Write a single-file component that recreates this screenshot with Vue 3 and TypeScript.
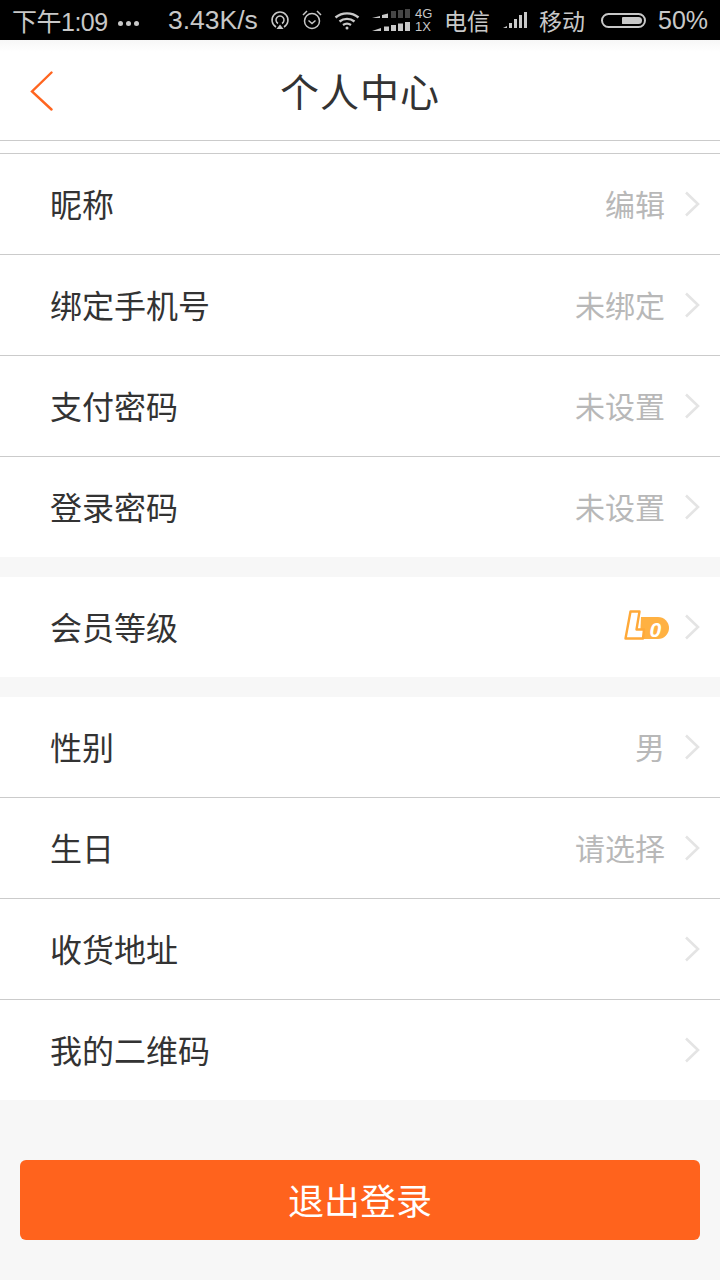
<script setup lang="ts">
interface Row {
  label: string
  value?: string
  level?: boolean
}

const groups: Row[][] = [
  [
    { label: '昵称', value: '编辑' },
    { label: '绑定手机号', value: '未绑定' },
    { label: '支付密码', value: '未设置' },
    { label: '登录密码', value: '未设置' },
  ],
  [{ label: '会员等级', level: true }],
  [
    { label: '性别', value: '男' },
    { label: '生日', value: '请选择' },
    { label: '收货地址' },
    { label: '我的二维码' },
  ],
]
</script>

<template>
  <div class="page">
    <div class="status">
      <span class="time">下午1:09</span>
      <span class="dots"><i /><i /><i /></span>
      <span class="speed">3.43K/s</span>
      <svg class="ic-sync" width="20" height="20" viewBox="0 0 20 20" fill="none" stroke="#c8c8c8" stroke-width="1.5">
        <path d="M6 17A8 8 0 1 1 14 17M8 13.500A4 4 0 1 1 12 13.500" />
        <path d="M6.500 19L10 14.500 13.500 19z" fill="#c8c8c8" stroke="none" />
      </svg>
      <svg class="ic-alarm" width="22" height="22" viewBox="0 0 22 22" fill="none" stroke="#c8c8c8" stroke-width="1.5">
        <circle cx="11" cy="12" r="7.500" />
        <path d="M7.500 11.500l3.500 3 3.500-3M2 6l4-4M20 6l-4-4" />
      </svg>
      <svg class="ic-wifi" width="26" height="20" viewBox="0 0 26 20" fill="none" stroke="#c8c8c8" stroke-width="2.400">
        <path d="M1.500 7.500c6.500-5.500 16.500-5.500 23 0M5.500 11.500c4.500-3.500 10.500-3.500 15 0M9 15c2.500-1.700 5.500-1.700 8 0" />
        <circle cx="13" cy="18" r="1.500" fill="#c8c8c8" stroke="none" />
      </svg>
      <svg class="ic-sig" width="38" height="24" viewBox="0 0 38 24" fill="#c8c8c8">
        <g opacity="0.35">
          <rect x="19" y="3" width="5" height="7" />
          <rect x="26" y="2" width="5" height="8" />
          <rect x="33" y="1" width="5" height="9" />
        </g>
        <path d="M0 10l8-2v2zM10 10V7l6-1.500V10z" />
        <path d="M0 23l9-3v3z" />
        <rect x="12" y="18.500" width="5" height="4.500" />
        <rect x="19" y="17" width="5" height="6" />
        <rect x="26" y="15.500" width="5" height="7.500" />
        <rect x="33" y="14" width="5" height="9" />
      </svg>
      <span class="net"><b>4G</b><b>1X</b></span>
      <span class="carrier first">电信</span>
      <svg class="ic-bars" width="26" height="18" viewBox="0 0 26 18" fill="#c8c8c8">
        <path d="M0 17l4-2v2zM6 17v-5h3v5zM11 17V8h3v9zM16 17V4h3v13zM21 17V1h3v16z" />
      </svg>
      <span class="carrier">移动</span>
      <span class="battery"><i /></span>
      <span class="pct">50%</span>
    </div>

    <header class="nav">
      <svg class="back" width="24" height="40" viewBox="0 0 24 40" fill="none" stroke="#ff6520" stroke-width="2.400" stroke-linecap="round">
        <path d="M21.500 1.500L2 20.500l19.500 18" />
      </svg>
      <h1>个人中心</h1>
    </header>

    <div class="spacer" />

    <section v-for="(group, g) in groups" :key="g" class="group">
      <div v-for="row in group" :key="row.label" class="row">
        <span class="label">{{ row.label }}</span>
        <span v-if="row.value" class="value">{{ row.value }}</span>
        <svg v-if="row.level" class="level" width="48" height="34" viewBox="0 2 48 34">
          <path d="M19 9h17a11 11 0 0 1 0 22H18z" fill="#ffb142" />
          <path d="M8.500 3.500h9L14.500 21.500H22L21 30.500H3.500z" fill="#fff" stroke="#ffa938" stroke-width="2.400" stroke-linejoin="round" />
          <text x="27.500" y="29" class="level-num">0</text>
        </svg>
        <svg class="chev" width="16" height="26" viewBox="0 0 16 26" fill="none" stroke="#e4e4e4" stroke-width="2.600">
          <path d="M2 1.500L14 13 2 24.500" />
        </svg>
      </div>
    </section>

    <div class="footer">
      <button class="logout" type="button">退出登录</button>
    </div>
  </div>
</template>

<style scoped>
.page {
  width: 720px;
  height: 1280px;
  overflow: hidden;
  background: #f7f7f7;
  font-family: "Liberation Sans", "Noto Sans CJK SC", sans-serif;
}

.status {
  height: 40px;
  background: #000;
  color: #c8c8c8;
  display: flex;
  align-items: center;
  font-size: 26px;
  padding-left: 12px;
  white-space: nowrap;
}

.time {
  width: 104px;
  font-size: 25px;
  letter-spacing: -0.5px;
}

.dots {
  display: flex;
  gap: 3px;
  margin: 6px 0 0 2px;
  width: 50px;
}

.dots i {
  width: 5px;
  height: 5px;
  border-radius: 50%;
  background: #c8c8c8;
}

.speed {
  width: 102px;
  font-size: 26.500px;
}

.ic-alarm {
  margin-left: 11px;
}

.ic-wifi {
  margin-left: 11px;
}

.ic-sig {
  margin-left: 12px;
}

.net {
  display: flex;
  flex-direction: column;
  font-size: 13px;
  line-height: 13px;
  margin-left: 5px;
  width: 22px;
}

.net b {
  font-weight: 400;
}

.carrier {
  font-size: 23px;
}

.carrier.first {
  margin-left: 7px;
}

.ic-bars {
  margin: 0 10px 0 13px;
}

.battery {
  width: 45px;
  height: 15px;
  border: 2px solid #c8c8c8;
  border-radius: 9px;
  margin-left: 16px;
  display: flex;
  justify-content: flex-end;
  padding: 2px;
  box-sizing: border-box;
}

.battery i {
  width: 20px;
  background: #c8c8c8;
  border-radius: 1px 4px 4px 1px;
}

.pct {
  margin-left: 12px;
  font-size: 25px;
}

.nav {
  height: 100px;
  background: linear-gradient(#f7f7f7, #fff 12px);
  border-bottom: 1px solid #cbcbcb;
  display: flex;
  align-items: center;
  justify-content: center;
  position: relative;
}

.nav h1 {
  margin: 0;
  font-size: 39px;
  font-weight: 400;
  color: #333;
  letter-spacing: 1px;
}

.back {
  position: absolute;
  left: 30px;
  top: 31px;
}

.spacer {
  height: 12px;
  background: #fff;
  border-bottom: 1px solid #cbcbcb;
}

.group {
  background: #fff;
  margin-bottom: 20px;
}

.group:nth-of-type(3) {
  margin-bottom: 0;
}

.row {
  height: 100px;
  display: flex;
  align-items: center;
  padding-left: 50px;
  padding-right: 20px;
  border-bottom: 1px solid #cbcbcb;
}

.row:last-child {
  border-bottom: 0;
}

.label {
  flex: 1;
  font-size: 32px;
  color: #333;
  margin-top: -2px;
}

.value {
  font-size: 30px;
  color: #b8b8b8;
  margin-top: -2px;
}

.level {
  margin-right: -5px;
}

.level-num {
  font-family: "Liberation Sans", sans-serif;
  font-size: 21px;
  font-style: italic;
  font-weight: 700;
  fill: #fff;
}

.chev {
  margin-left: 19px;
}

.footer {
  padding: 60px 20px 0;
}

.logout {
  display: block;
  width: 100%;
  height: 80px;
  border: 0;
  border-radius: 6px;
  background: #ff631d;
  color: #fff;
  font-family: inherit;
  font-size: 36px;
  padding: 0 0 2px;
}
</style>
